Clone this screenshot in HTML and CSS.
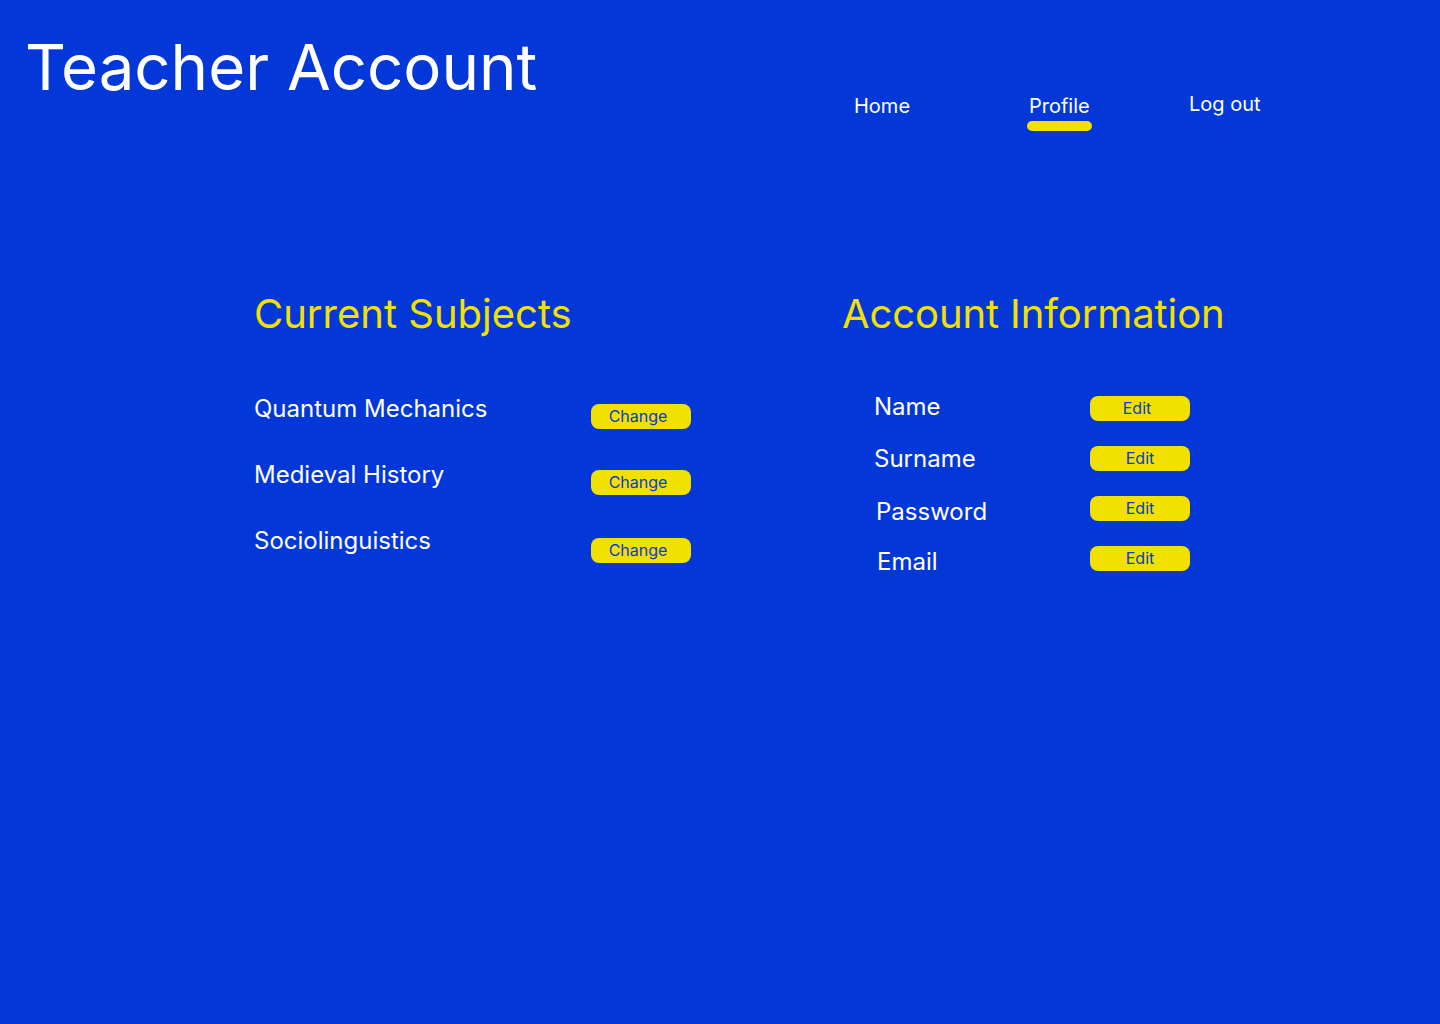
FILE: index.html
```html
<!DOCTYPE html>
<html lang="en">
<head>
<meta charset="utf-8">
<title>Teacher Account</title>
<link rel="stylesheet" href="styles.css">
</head>
<body>
<header class="top">
  <h1 class="title">Teacher Account</h1>
  <nav class="nav">
    <a class="nav-link nav-home" href="#">Home</a>
    <a class="nav-link nav-profile active" href="#">Profile</a>
    <a class="nav-link nav-logout" href="#">Log out</a>
  </nav>
</header>
<main class="content">
  <section class="col col-subjects">
    <h2 class="heading">Current Subjects</h2>
    <ul class="list subjects">
      <li class="row subject-row"><span class="label">Quantum Mechanics</span><button class="btn btn-change">Change</button></li>
      <li class="row subject-row"><span class="label">Medieval History</span><button class="btn btn-change">Change</button></li>
      <li class="row subject-row row-last"><span class="label">Sociolinguistics</span><button class="btn btn-change">Change</button></li>
    </ul>
  </section>
  <section class="col col-account">
    <h2 class="heading">Account Information</h2>
    <ul class="list account">
      <li class="row account-row shift-0"><span class="label">Name</span><button class="btn btn-edit btn-edit-first">Edit</button></li>
      <li class="row account-row"><span class="label">Surname</span><button class="btn btn-edit">Edit</button></li>
      <li class="row account-row shift-2"><span class="label">Password</span><button class="btn btn-edit">Edit</button></li>
      <li class="row account-row shift-3"><span class="label">Email</span><button class="btn btn-edit">Edit</button></li>
    </ul>
  </section>
</main>
</body>
</html>
```
FILE: styles.css
```css
* { box-sizing: border-box; }
html, body {
  margin: 0;
  padding: 0;
}
body {
  width: 1440px;
  height: 1024px;
  background: #0437d8;
  color: #ffffff;
  font-family: Inter, "Noto Sans", sans-serif;
  overflow: hidden;
}
.top {
  display: flex;
  align-items: flex-start;
  padding: 28px 0 0 25px;
}
.title {
  margin: 0;
  font-size: 63.5px;
  font-weight: 400;
  line-height: 78px;
  letter-spacing: 0;
  width: 829px;
}
.nav {
  display: flex;
  align-items: flex-start;
  padding-top: 66px;
}
.nav-link {
  color: #ffffff;
  text-decoration: none;
  font-size: 20px;
  line-height: 24px;
  display: flex;
  flex-direction: column;
}
.nav-home { width: 175px; }
.nav-profile { width: 160px; }
.nav-logout { margin-top: -2px; }
.nav-link.active::after {
  content: "";
  display: block;
  width: 65px;
  height: 10px;
  margin: 3px 0 0 -2px;
  background: #f2e100;
  border-radius: 5px;
}
.content {
  display: flex;
  padding: 159px 0 0 254px;
}
.heading {
  margin: 0;
  font-size: 40px;
  font-weight: 400;
  line-height: 48px;
  color: #f2e100;
}
.col-account .heading { letter-spacing: -0.1px; }
.list {
  list-style: none;
  margin: 0;
  padding: 0;
}
.col-subjects { width: 588px; }
.subjects { margin-top: 56px; }
.subject-row {
  display: flex;
  align-items: flex-start;
  height: 66px;
}
.label {
  font-size: 24px;
  line-height: 29px;
}
.subject-row .label { width: 337px; }
.btn {
  border: 0;
  background: #f2e100;
  color: #0b3bd0;
  font-family: Inter, "Noto Sans", sans-serif;
  font-size: 16px;
  line-height: 25px;
  height: 25px;
  width: 100px;
  padding: 0;
  border-radius: 8px;
  text-align: center;
}
.btn-change {
  margin-top: 10px;
  padding-right: 6px;
}
.row-last .btn-change { margin-top: 12px; }
.account { margin-top: 45px; padding-left: 32px; }
.account-row {
  display: flex;
  align-items: center;
  height: 50px;
}
.account-row .label { width: 216px; }
.btn-edit-first { padding-right: 6px; }
.shift-0 .label { margin-top: -4px; }
.shift-2 .label { padding-left: 2px; margin-top: 6px; }
.shift-3 .label { padding-left: 3px; margin-top: 6px; }
```
